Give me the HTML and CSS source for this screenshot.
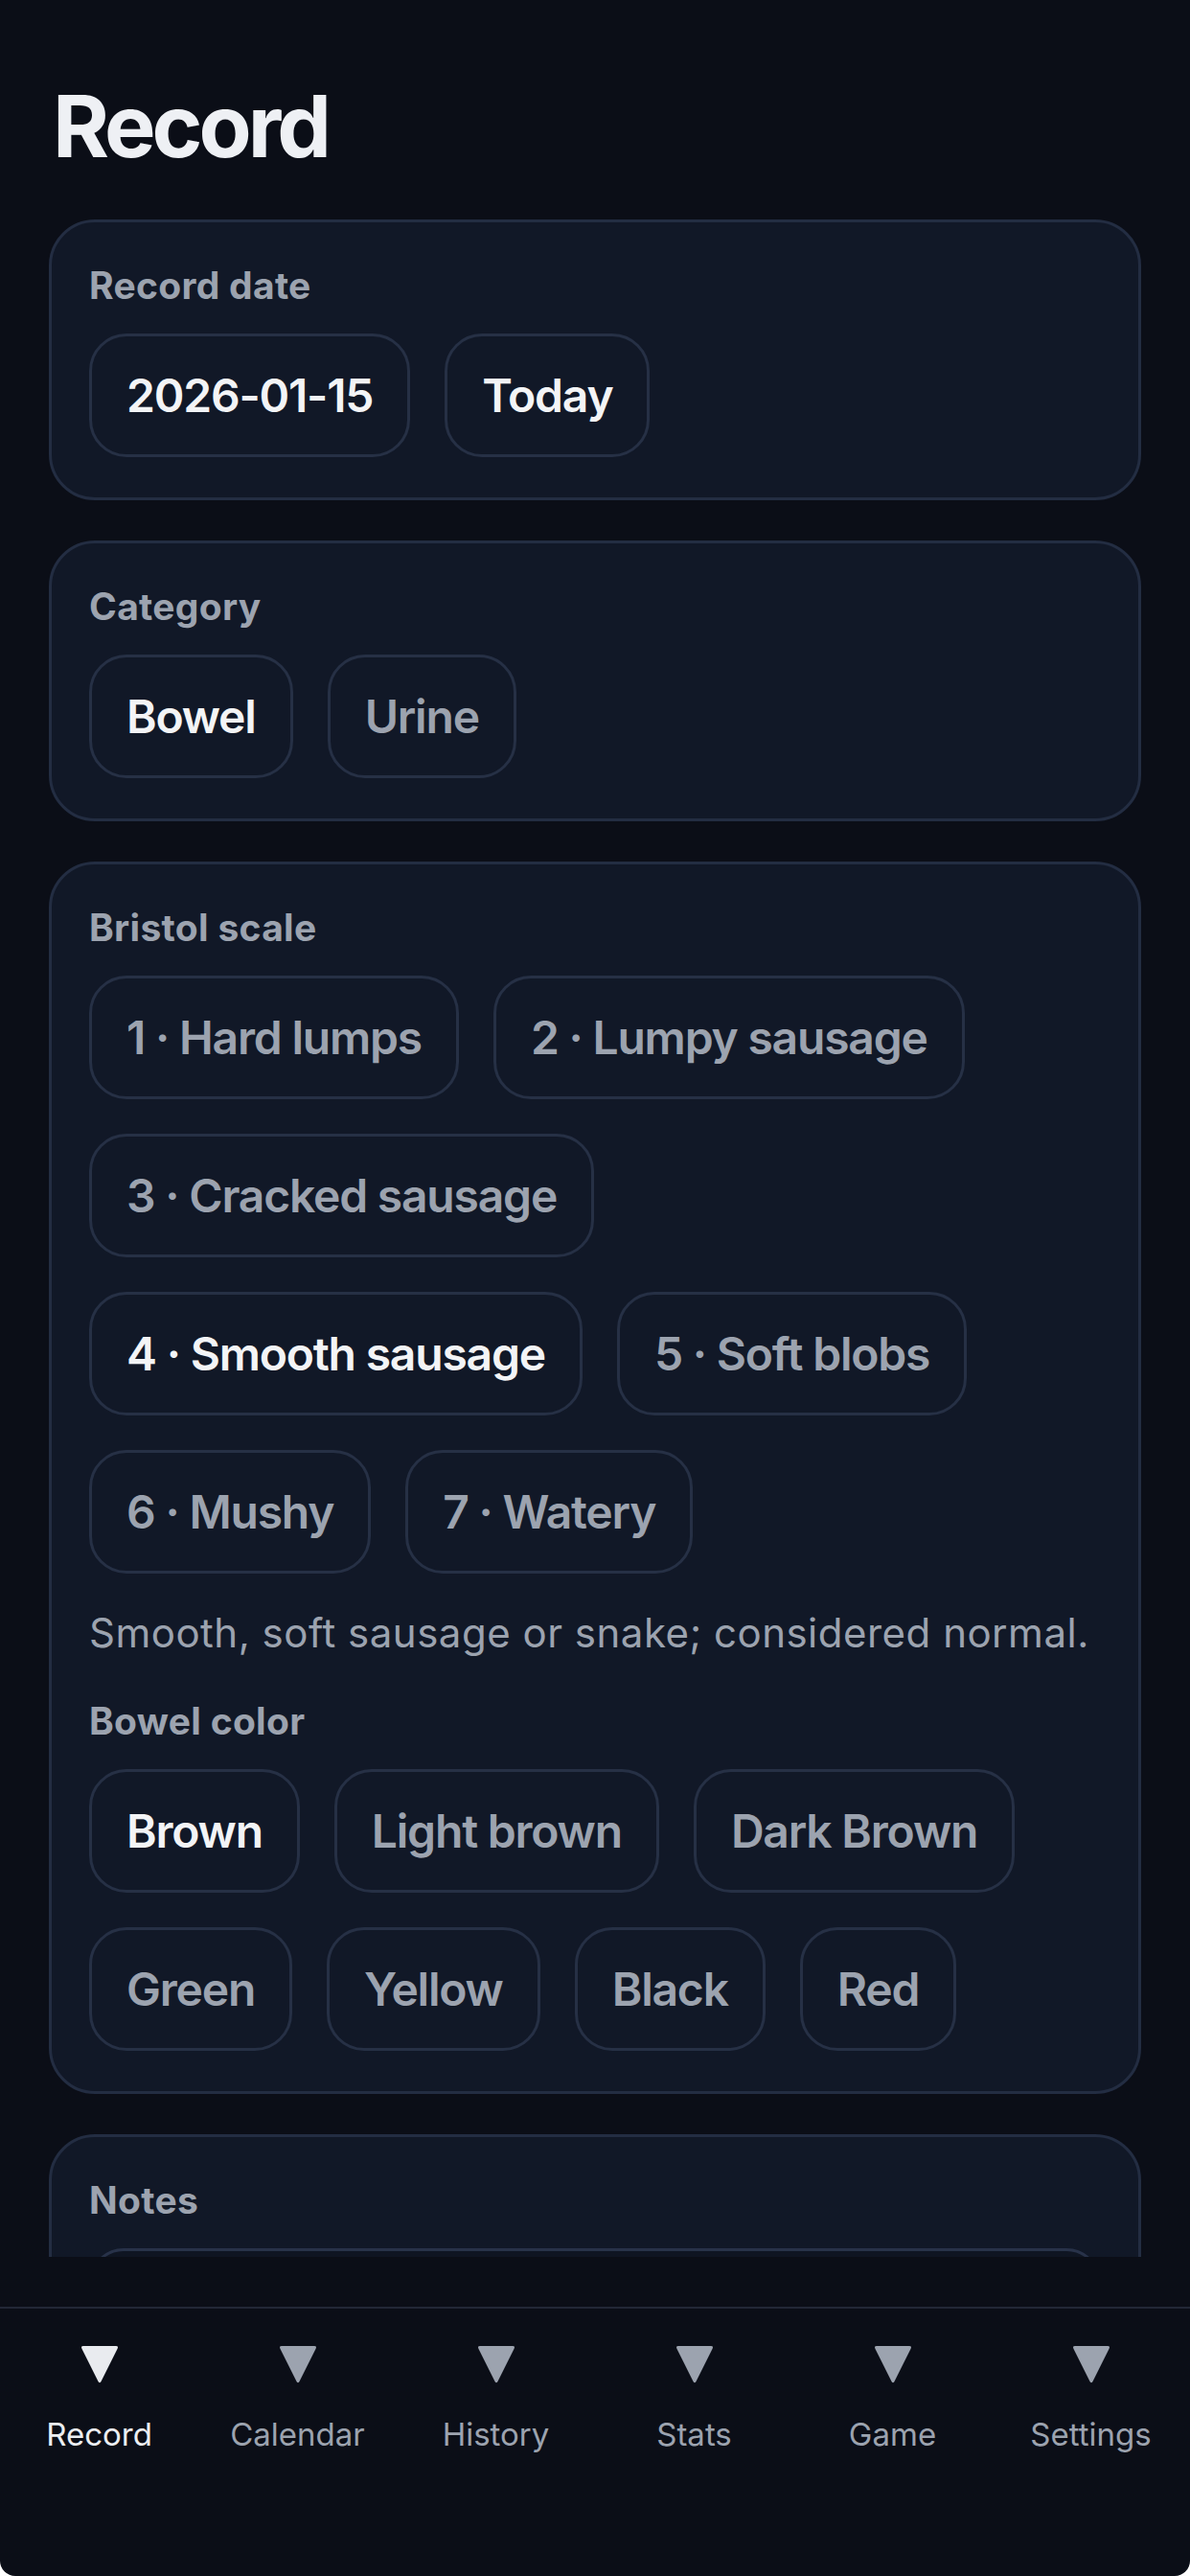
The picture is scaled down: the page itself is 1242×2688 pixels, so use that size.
FILE: index.html
```html
<!DOCTYPE html>
<html lang="en">
<head>
    <meta charset="UTF-8">
    <meta name="viewport" content="width=device-width, initial-scale=1.0">
    <title>Record</title>
    <link rel="stylesheet" href="styles.css">
</head>
<body>
    <div class="screen">
        <main class="content">
            <h1 class="title">Record</h1>

            <section class="card">
                <div class="label">Record date</div>
                <div class="chips">
                    <button class="chip active">2026-01-15</button>
                    <button class="chip active">Today</button>
                </div>
            </section>

            <section class="card">
                <div class="label">Category</div>
                <div class="chips">
                    <button class="chip active">Bowel</button>
                    <button class="chip">Urine</button>
                </div>
            </section>

            <section class="card">
                <div class="label">Bristol scale</div>
                <div class="chips">
                    <button class="chip">1 · Hard lumps</button>
                    <button class="chip">2 · Lumpy sausage</button>
                    <button class="chip">3 · Cracked sausage</button>
                    <button class="chip active">4 · Smooth sausage</button>
                    <button class="chip">5 · Soft blobs</button>
                    <button class="chip">6 · Mushy</button>
                    <button class="chip">7 · Watery</button>
                </div>
                <p class="hint">Smooth, soft sausage or snake; considered normal.</p>
                <div class="label">Bowel color</div>
                <div class="chips">
                    <button class="chip active">Brown</button>
                    <button class="chip">Light brown</button>
                    <button class="chip">Dark Brown</button>
                    <button class="chip">Green</button>
                    <button class="chip">Yellow</button>
                    <button class="chip">Black</button>
                    <button class="chip">Red</button>
                </div>
            </section>

            <section class="card">
                <div class="label">Notes</div>
                <textarea class="notes"></textarea>
            </section>
        </main>

        <nav class="tabbar">
            <div class="tab active">
                <svg class="tab-icon" viewBox="0 0 40 40"><path d="M3 1 H37 Q40 1 38.5 4 L21.5 38 Q20 40.5 18.5 38 L1.5 4 Q0 1 3 1 Z"/></svg>
                <span>Record</span>
            </div>
            <div class="tab">
                <svg class="tab-icon" viewBox="0 0 40 40"><path d="M3 1 H37 Q40 1 38.5 4 L21.5 38 Q20 40.5 18.5 38 L1.5 4 Q0 1 3 1 Z"/></svg>
                <span>Calendar</span>
            </div>
            <div class="tab">
                <svg class="tab-icon" viewBox="0 0 40 40"><path d="M3 1 H37 Q40 1 38.5 4 L21.5 38 Q20 40.5 18.5 38 L1.5 4 Q0 1 3 1 Z"/></svg>
                <span>History</span>
            </div>
            <div class="tab">
                <svg class="tab-icon" viewBox="0 0 40 40"><path d="M3 1 H37 Q40 1 38.5 4 L21.5 38 Q20 40.5 18.5 38 L1.5 4 Q0 1 3 1 Z"/></svg>
                <span>Stats</span>
            </div>
            <div class="tab">
                <svg class="tab-icon" viewBox="0 0 40 40"><path d="M3 1 H37 Q40 1 38.5 4 L21.5 38 Q20 40.5 18.5 38 L1.5 4 Q0 1 3 1 Z"/></svg>
                <span>Game</span>
            </div>
            <div class="tab">
                <svg class="tab-icon" viewBox="0 0 40 40"><path d="M3 1 H37 Q40 1 38.5 4 L21.5 38 Q20 40.5 18.5 38 L1.5 4 Q0 1 3 1 Z"/></svg>
                <span>Settings</span>
            </div>
        </nav>
    </div>
</body>
</html>
```

FILE: styles.css
```css
html {
    background: #ffffff;
}

body {
    margin: 0;
    font-family: Inter, "Noto Sans", sans-serif;
}

.screen {
    height: 2688px;
    display: flex;
    flex-direction: column;
    background: #0b0e17;
    border-radius: 0 0 16px 16px;
    overflow: hidden;
}

.content {
    height: 2355px;
    flex: none;
    box-sizing: border-box;
    padding: 77px 51px 0;
    overflow: hidden;
}

.title {
    margin: 0 0 43px 4px;
    font-size: 90px;
    line-height: 109px;
    font-weight: 700;
    letter-spacing: -4px;
    color: #eef0f4;
}

.card {
    background: #111827;
    border: 3px solid #232d42;
    border-radius: 48px;
    padding: 42px 39px;
    margin-bottom: 42px;
}

.label {
    font-size: 39px;
    line-height: 47px;
    font-weight: 700;
    letter-spacing: 0.3px;
    color: #9ca3af;
    margin-bottom: 27px;
}

.chips {
    display: flex;
    flex-wrap: wrap;
    gap: 36px;
}

.chip {
    height: 129px;
    box-sizing: border-box;
    padding: 0 36px;
    border: 3px solid #263045;
    border-radius: 39px;
    background: #111827;
    font-family: inherit;
    font-size: 48px;
    font-weight: 600;
    letter-spacing: -1.2px;
    color: #9ca3af;
}

.chip.active {
    color: #f3f4f6;
}

.hint {
    margin: 32px 0 38px;
    font-size: 42px;
    line-height: 60px;
    letter-spacing: 0.5px;
    color: #9ca3af;
}

.notes {
    display: block;
    width: 100%;
    height: 240px;
    box-sizing: border-box;
    background: #0f1522;
    border: 3px solid #283249;
    border-radius: 36px;
    resize: none;
}

.tabbar {
    margin-top: 52px;
    border-top: 2px solid #222736;
    display: flex;
    padding-top: 38px;
}

.tab {
    flex: 1;
    display: flex;
    flex-direction: column;
    align-items: center;
    font-size: 33px;
    line-height: 40px;
    color: #9ca3af;
}

.tab-icon {
    width: 40px;
    height: 40px;
    margin-bottom: 33px;
    fill: #9ca3af;
}

.tab.active {
    color: #eceef2;
}

.tab.active .tab-icon {
    fill: #e9ebef;
}
```
